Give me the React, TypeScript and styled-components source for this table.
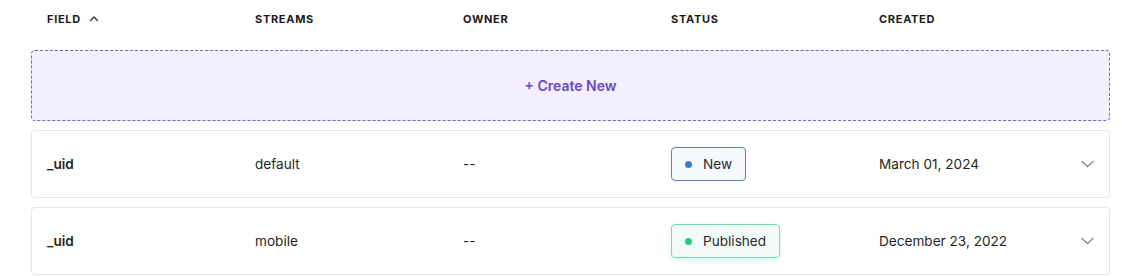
import styled, { createGlobalStyle } from 'styled-components';

const GlobalStyle = createGlobalStyle`
  body {
    margin: 0;
    background: #ffffff;
    font-family: Inter, 'Noto Sans', sans-serif;
    color: #1c1c1e;
  }
`;

const Table = styled.div`
  display: flex;
  flex-direction: column;
  gap: 9px;
  padding: 0 12px 0 31px;
`;

const HeaderRow = styled.div`
  display: grid;
  grid-template-columns: repeat(4, 208px) 1fr;
  align-items: center;
  height: 38px;
  padding: 0 16px;
  margin-bottom: 3px;
`;

const HeaderCell = styled.div`
  display: flex;
  align-items: center;
  gap: 8px;
  font-size: 11px;
  font-weight: 700;
  letter-spacing: 0.7px;
  text-transform: uppercase;
  color: #1a1a1a;
`;

const CreateBox = styled.button`
  display: flex;
  align-items: center;
  justify-content: center;
  height: 71px;
  border: 1px dashed #7e5fcb;
  border-radius: 4px;
  background: #f3effe;
  color: #6a48be;
  font-family: inherit;
  font-size: 14px;
  font-weight: 600;
  cursor: pointer;
`;

const Row = styled.div`
  display: grid;
  grid-template-columns: repeat(4, 208px) 1fr auto;
  align-items: center;
  height: 68px;
  box-sizing: border-box;
  padding: 0 15px;
  border: 1px solid #e6e6e6;
  border-radius: 4px;
  background: #ffffff;
  font-size: 13.6px;
`;

const Cell = styled.div<{ $bold?: boolean }>`
  font-weight: ${({ $bold }) => ($bold ? 600 : 400)};
  color: #1f1f22;
`;

const Badge = styled.span<{ $border: string; $bg: string; $glow?: string }>`
  display: inline-flex;
  align-items: center;
  gap: 11px;
  height: 34px;
  box-sizing: border-box;
  padding: 0 13px;
  border: 1px solid ${({ $border }) => $border};
  border-radius: 4px;
  background: ${({ $bg }) => $bg};
  box-shadow: ${({ $glow }) => ($glow ? `0 1px 4px ${$glow}` : 'none')};
  color: #2a2a2e;
  font-size: 13.6px;
`;

const Dot = styled.span<{ $color: string }>`
  width: 7px;
  height: 7px;
  border-radius: 50%;
  background: ${({ $color }) => $color};
`;

const Chevron = styled.span`
  display: flex;
  color: #8e8e93;
`;

const rows = [
  {
    field: '_uid',
    stream: 'default',
    owner: '--',
    status: 'New',
    dot: '#3d7cc9',
    border: '#5a82b8',
    bg: '#f6f9fd',
    glow: '',
    created: 'March 01, 2024',
  },
  {
    field: '_uid',
    stream: 'mobile',
    owner: '--',
    status: 'Published',
    dot: '#1fcf7c',
    border: '#6fe0ad',
    bg: '#f4f9f9',
    glow: 'rgba(60, 210, 140, 0.25)',
    created: 'December 23, 2022',
  },
];

export default function App() {
  return (
    <>
      <GlobalStyle />
      <Table>
        <HeaderRow>
          <HeaderCell>
            Field
            <svg width="10" height="10" viewBox="0 0 10 10" fill="none">
              <path d="M1.5 6.5L5 3l3.5 3.5" stroke="#333" strokeWidth="1.4" strokeLinecap="round" strokeLinejoin="round" />
            </svg>
          </HeaderCell>
          <HeaderCell>Streams</HeaderCell>
          <HeaderCell>Owner</HeaderCell>
          <HeaderCell>Status</HeaderCell>
          <HeaderCell>Created</HeaderCell>
        </HeaderRow>

        <CreateBox type="button">+ Create New</CreateBox>

        {rows.map((r) => (
          <Row key={r.stream}>
            <Cell $bold>{r.field}</Cell>
            <Cell>{r.stream}</Cell>
            <Cell>{r.owner}</Cell>
            <Cell>
              <Badge $border={r.border} $bg={r.bg} $glow={r.glow || undefined}>
                <Dot $color={r.dot} />
                {r.status}
              </Badge>
            </Cell>
            <Cell>{r.created}</Cell>
            <Chevron>
              <svg width="14" height="14" viewBox="0 0 14 14" fill="none">
                <path d="M2 4.5L7.5 9.5L13 4.5" stroke="currentColor" strokeWidth="1.5" strokeLinecap="round" strokeLinejoin="round" />
              </svg>
            </Chevron>
          </Row>
        ))}
      </Table>
    </>
  );
}
